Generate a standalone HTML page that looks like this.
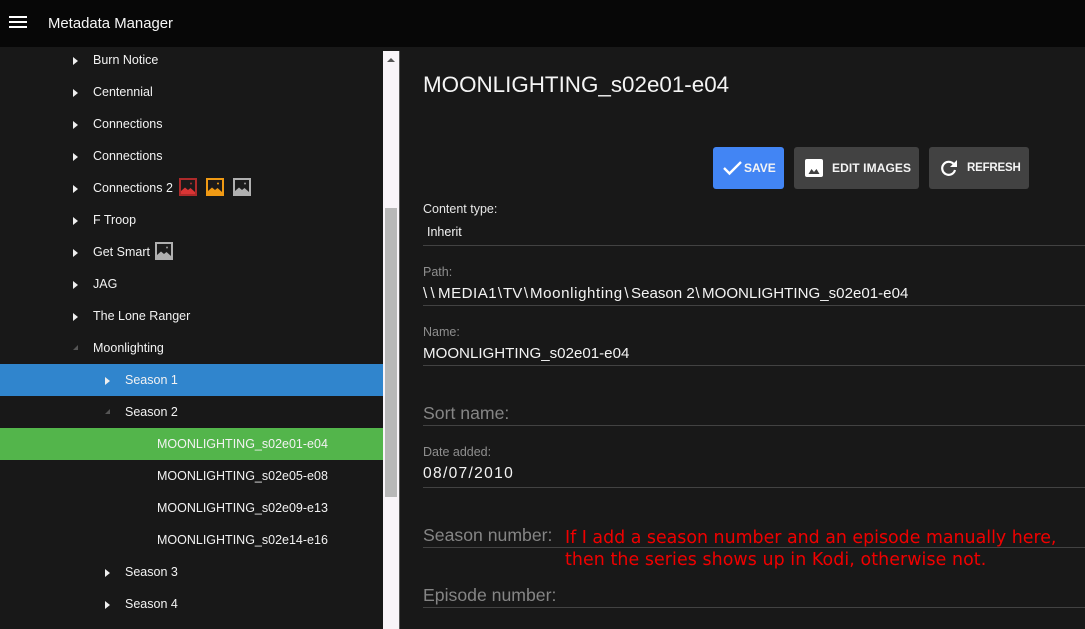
<!DOCTYPE html>
<html lang="en">
<head>
<meta charset="utf-8">
<title>Metadata Manager</title>
<style>
html,body{margin:0;padding:0;width:1085px;height:629px;overflow:hidden;background:#181818;}
body{position:relative;font-family:"Liberation Sans",sans-serif;color:#fff;}
.a{position:absolute;white-space:nowrap;}
#top{position:absolute;left:0;top:0;width:1085px;height:47px;background:#070707;}
.row{position:absolute;left:0;width:383px;height:32px;line-height:32px;font-size:12.5px;color:#f2f2f2;white-space:nowrap;}
.row span.t{position:absolute;top:0;}
.arr{position:absolute;width:0;height:0;border-left:5px solid #eee;border-top:4px solid transparent;border-bottom:4px solid transparent;top:13px;}
.open{position:absolute;width:0;height:0;border-left:5px solid transparent;border-bottom:5px solid #555;top:13px;}
.lbl{position:absolute;left:423px;font-size:12.5px;color:#8e8e8e;white-space:nowrap;}
.val{position:absolute;left:423px;font-size:15.1px;color:#f4f4f4;white-space:nowrap;}
.val b{display:inline-block;font-weight:normal;text-align:center;}
.big{position:absolute;left:423px;font-size:17.65px;color:#858585;white-space:nowrap;}
.line{position:absolute;left:423px;width:662px;height:1px;background:#424242;}
.btn{position:absolute;top:147px;height:42px;border-radius:3px;background:#424242;font-size:12px;font-weight:bold;line-height:42px;color:#f4f4f4;}
.btn span{position:absolute;top:0;white-space:nowrap;}
.btn svg{position:absolute;}
.ic{position:absolute;top:178px;width:18px;height:18px;}
</style>
</head>
<body>
<div id="top"></div>
<svg class="a" style="left:9px;top:16px" width="18" height="12"><rect y="0" width="18" height="2" fill="#fff"/><rect y="5" width="18" height="2" fill="#fff"/><rect y="10" width="18" height="2" fill="#fff"/></svg>
<div class="a" style="left:48px;top:15px;font-size:14.9px;line-height:18px;color:#f6f6f6">Metadata Manager</div>

<div class="row" style="top:44px"><i class="arr" style="left:73px"></i><span class="t" style="left:93px">Burn Notice</span></div>
<div class="row" style="top:76px"><i class="arr" style="left:73px"></i><span class="t" style="left:93px">Centennial</span></div>
<div class="row" style="top:108px"><i class="arr" style="left:73px"></i><span class="t" style="left:93px">Connections</span></div>
<div class="row" style="top:140px"><i class="arr" style="left:73px"></i><span class="t" style="left:93px">Connections</span></div>
<div class="row" style="top:172px"><i class="arr" style="left:73px"></i><span class="t" style="left:93px">Connections 2</span></div>
<div class="row" style="top:204px"><i class="arr" style="left:73px"></i><span class="t" style="left:93px">F Troop</span></div>
<div class="row" style="top:236px"><i class="arr" style="left:73px"></i><span class="t" style="left:93px">Get Smart</span></div>
<div class="row" style="top:268px"><i class="arr" style="left:73px"></i><span class="t" style="left:93px">JAG</span></div>
<div class="row" style="top:300px"><i class="arr" style="left:73px"></i><span class="t" style="left:93px">The Lone Ranger</span></div>
<div class="row" style="top:332px"><i class="open" style="left:73px"></i><span class="t" style="left:93px">Moonlighting</span></div>
<div class="row" style="top:364px;background:#3085cd"><i class="arr" style="left:105px"></i><span class="t" style="left:125px">Season 1</span></div>
<div class="row" style="top:396px"><i class="open" style="left:105px"></i><span class="t" style="left:125px">Season 2</span></div>
<div class="row" style="top:428px;background:#53b54b"><span class="t" style="left:157px">MOONLIGHTING_s02e01-e04</span></div>
<div class="row" style="top:460px"><span class="t" style="left:157px">MOONLIGHTING_s02e05-e08</span></div>
<div class="row" style="top:492px"><span class="t" style="left:157px">MOONLIGHTING_s02e09-e13</span></div>
<div class="row" style="top:524px"><span class="t" style="left:157px">MOONLIGHTING_s02e14-e16</span></div>
<div class="row" style="top:556px"><i class="arr" style="left:105px"></i><span class="t" style="left:125px">Season 3</span></div>
<div class="row" style="top:588px"><i class="arr" style="left:105px"></i><span class="t" style="left:125px">Season 4</span></div>

<svg class="ic" style="left:179px" viewBox="0 0 18 18"><rect width="18" height="18" fill="#ad2a2a"/><rect x="2" y="2" width="14" height="13.500" fill="#1c1a1a"/><path d="M2 16v-3l4-3.500 3 2.500 2.500-2 4.500 4v2z" fill="#d93535"/><circle cx="12" cy="5.500" r="1" fill="#a83030"/></svg>
<svg class="ic" style="left:206px" viewBox="0 0 18 18"><rect width="18" height="18" fill="#f09a14"/><rect x="2" y="2" width="14" height="13.500" fill="#1c1a1a"/><path d="M2 16v-3l4-3.500 3 2.500 2.500-2 4.500 4v2z" fill="#f09a14"/><circle cx="12" cy="5.500" r="1" fill="#f09a14"/></svg>
<svg class="ic" style="left:233px" viewBox="0 0 18 18"><rect width="18" height="18" fill="#b0b0b0"/><rect x="2" y="2" width="14" height="13.500" fill="#1c1c1c"/><path d="M2 16v-3l4-3.500 3 2.500 2.500-2 4.500 4v2z" fill="#b0b0b0"/><circle cx="12" cy="5.500" r="1" fill="#999"/></svg>
<svg class="ic" style="left:155px;top:242px" viewBox="0 0 18 18"><rect width="18" height="18" fill="#b0b0b0"/><rect x="2" y="2" width="14" height="13.500" fill="#1c1c1c"/><path d="M2 16v-3l4-3.500 3 2.500 2.500-2 4.500 4v2z" fill="#b0b0b0"/><circle cx="12" cy="5.500" r="1" fill="#999"/></svg>

<div class="a" style="left:383px;top:51px;width:16px;height:578px;background:#f8f4f8"></div>
<div class="a" style="left:399px;top:51px;width:1px;height:578px;background:#555"></div>
<div class="a" style="left:387px;top:58px;width:0;height:0;border-left:4px solid transparent;border-right:4px solid transparent;border-bottom:4px solid #555"></div>
<div class="a" style="left:385px;top:208px;width:12px;height:289px;background:#b8b8b8"></div>

<div class="a" style="left:423px;top:71px;font-size:22.4px;line-height:28px;color:#f4f4f4">MOONLIGHTING_s02e01-e04</div>

<div class="btn" style="left:713px;width:71px;background:#4285f4">
<svg style="left:10px;top:12px" width="19" height="18" viewBox="0 0 19 18"><path d="M1 9l5.500 5.500L18 3" fill="none" stroke="#fff" stroke-width="2.400"/></svg>
<span style="left:31px">SAVE</span></div>
<div class="btn" style="left:794px;width:125px">
<svg style="left:11px;top:12px" width="18" height="18" viewBox="0 0 18 18"><path d="M0 2a2 2 0 0 1 2-2h14a2 2 0 0 1 2 2v14a2 2 0 0 1-2 2H2a2 2 0 0 1-2-2z" fill="#fff"/><path d="M3.500 15l3-5 2.500 3 2.500-3 3 5z" fill="#424242"/></svg>
<span style="left:38px;letter-spacing:.1px">EDIT IMAGES</span></div>
<div class="btn" style="left:929px;width:100px">
<svg style="left:11px;top:12px" width="18" height="18" viewBox="0 0 18 18"><path d="M15 11a6.500 6.500 0 1 1-1.600-6.200" fill="none" stroke="#fff" stroke-width="2.200"/><path d="M17 1v7h-7z" fill="#fff"/></svg>
<span style="left:38px;font-size:11.5px;letter-spacing:-.2px">REFRESH</span></div>

<div class="lbl" style="left:423px;top:202px;color:#e6e6e6">Content type:</div>
<div class="a" style="left:427px;top:225px;font-size:12.5px;color:#f4f4f4">Inherit</div>
<div class="line" style="top:245px"></div>

<div class="lbl" style="top:265px">Path:</div>
<div class="val" style="top:285px"><b style="width:15px;letter-spacing:3.300px;text-align:left">\\</b><b style="width:59px;letter-spacing:.5px;text-align:left">MEDIA1</b><b style="width:6px">\</b><b style="width:19px;text-align:left">TV</b><b style="width:8px">\</b><b style="width:92px;letter-spacing:.6px;text-align:left">Moonlighting</b><b style="width:9px">\</b><b style="width:62px;text-align:left">Season 2</b><b style="width:9px">\</b>MOONLIGHTING_s02e01-e04</div>
<div class="line" style="top:305px"></div>

<div class="lbl" style="top:325px">Name:</div>
<div class="val" style="top:345px">MOONLIGHTING_s02e01-e04</div>
<div class="line" style="top:365px"></div>

<div class="big" style="top:403px">Sort name:</div>
<div class="line" style="top:425px"></div>

<div class="lbl" style="top:445px">Date added:</div>
<div class="val" style="top:465px;font-size:15.6px;letter-spacing:1.300px">08/07/2010</div>
<div class="line" style="top:487px"></div>

<div class="big" style="top:525px">Season number:</div>
<div class="line" style="top:547px"></div>

<div class="big" style="top:585px">Episode number:</div>
<div class="line" style="top:607px"></div>

<div class="a" style="left:565px;top:527px;font-family:'DejaVu Sans',sans-serif;font-size:17.4px;line-height:22px;color:#f00000">If I add a season number and an episode manually here,<br><span style="letter-spacing:.08px">then the series shows up in Kodi, otherwise not.</span></div>
</body>
</html>
